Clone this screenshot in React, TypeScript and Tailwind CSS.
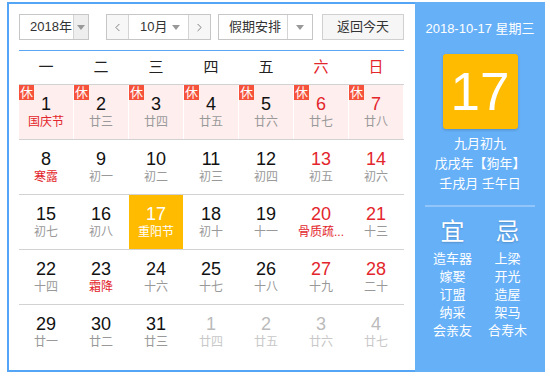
import { ChevronLeft, ChevronRight } from 'lucide-react';

type Day = {
  n: number;
  lunar: string;
  rest?: boolean;
  fest?: boolean;
  weekend?: boolean;
  other?: boolean;
  today?: boolean;
};

const weekdays = ['一', '二', '三', '四', '五', '六', '日'];

const rows: Day[][] = [
  [
    { n: 1, lunar: '国庆节', rest: true, fest: true },
    { n: 2, lunar: '廿三', rest: true },
    { n: 3, lunar: '廿四', rest: true },
    { n: 4, lunar: '廿五', rest: true },
    { n: 5, lunar: '廿六', rest: true },
    { n: 6, lunar: '廿七', rest: true, weekend: true },
    { n: 7, lunar: '廿八', rest: true, weekend: true },
  ],
  [
    { n: 8, lunar: '寒露', fest: true },
    { n: 9, lunar: '初一' },
    { n: 10, lunar: '初二' },
    { n: 11, lunar: '初三' },
    { n: 12, lunar: '初四' },
    { n: 13, lunar: '初五', weekend: true },
    { n: 14, lunar: '初六', weekend: true },
  ],
  [
    { n: 15, lunar: '初七' },
    { n: 16, lunar: '初八' },
    { n: 17, lunar: '重阳节', today: true },
    { n: 18, lunar: '初十' },
    { n: 19, lunar: '十一' },
    { n: 20, lunar: '骨质疏...', weekend: true, fest: true },
    { n: 21, lunar: '十三', weekend: true },
  ],
  [
    { n: 22, lunar: '十四' },
    { n: 23, lunar: '霜降', fest: true },
    { n: 24, lunar: '十六' },
    { n: 25, lunar: '十七' },
    { n: 26, lunar: '十八' },
    { n: 27, lunar: '十九', weekend: true },
    { n: 28, lunar: '二十', weekend: true },
  ],
  [
    { n: 29, lunar: '廿一' },
    { n: 30, lunar: '廿二' },
    { n: 31, lunar: '廿三' },
    { n: 1, lunar: '廿四', other: true },
    { n: 2, lunar: '廿五', other: true },
    { n: 3, lunar: '廿六', other: true },
    { n: 4, lunar: '廿七', other: true },
  ],
];

const good = ['造车器', '嫁娶', '订盟', '纳采', '会亲友'];
const bad = ['上梁', '开光', '造屋', '架马', '合寿木'];

const font = "font-['Liberation_Sans','Noto_Sans_CJK_SC',sans-serif]";

function Arrow() {
  return <span className="block w-0 h-0 border-x-[4px] border-x-transparent border-t-[5px] border-t-[#999]" />;
}

function DayCell({ d }: { d: Day }) {
  let bg = '';
  if (d.today) bg = 'bg-[#ffbb00]';
  else if (d.rest) bg = 'bg-[#feeeee]';

  let numColor = 'text-[#111]';
  if (d.today) numColor = 'text-white';
  else if (d.other) numColor = 'text-[#bbb]';
  else if (d.weekend) numColor = 'text-[#e3262c]';

  let lunarColor = 'text-[#999]';
  if (d.today) lunarColor = 'text-white';
  else if (d.other) lunarColor = 'text-[#c8c8c8]';
  else if (d.fest) lunarColor = 'text-[#e3262c]';

  return (
    <div className={`relative w-[54px] h-[54px] mr-px flex flex-col items-center justify-center ${bg}`}>
      {d.rest && (
        <span className="absolute left-0 top-0 w-[15px] h-[15px] bg-[#f5513b] text-white text-[13px] leading-[15px] text-center">
          休
        </span>
      )}
      <span className={`text-[18px] leading-[20px] ${numColor}`}>{d.n}</span>
      <span className={`text-[12px] leading-[16px] whitespace-nowrap ${lunarColor}`}>{d.lunar}</span>
    </div>
  );
}

export default function App() {
  return (
    <div className={`ml-[7px] mt-[2px] w-[538px] h-[370px] flex ${font}`}>
      <div className="w-[408px] h-full border-l-2 border-y-2 border-[#55a5f6] bg-white pl-[10px] pr-[11px] pt-[10px]">
        {/* toolbar */}
        <div className="flex items-center h-[26px] text-[13px] text-[#333] whitespace-nowrap">
          <div className="flex w-[70px] h-[26px] border border-[#c6c6c6]">
            <div className="flex-1 flex items-center pl-[10px]">2018年</div>
            <div className="w-[15px] flex items-center justify-center bg-[#eee] border-l border-[#d4d4d4]">
              <Arrow />
            </div>
          </div>
          <div className="flex ml-[17px] w-[105px] h-[26px] border border-[#c6c6c6]">
            <div className="w-[22px] flex items-center justify-center bg-[#f7f7f7] border-r border-[#d4d4d4] text-[#666]">
              <ChevronLeft size={13} strokeWidth={1.5} />
            </div>
            <div className="flex-1 flex items-center justify-between pl-[11px] pr-[8px]">
              <span>10月</span>
              <Arrow />
            </div>
            <div className="w-[22px] flex items-center justify-center bg-[#f7f7f7] border-l border-[#d4d4d4] text-[#666]">
              <ChevronRight size={13} strokeWidth={1.5} />
            </div>
          </div>
          <div className="flex ml-[7px] w-[95px] h-[26px] border border-[#c6c6c6]">
            <div className="flex-1 flex items-center pl-[10px]">假期安排</div>
            <div className="w-[25px] flex items-center justify-center border-l border-[#d4d4d4]">
              <Arrow />
            </div>
          </div>
          <div className="ml-[9px] w-[82px] h-[26px] flex items-center justify-center border border-[#d0d0d0] bg-[#f6f6f6]">
            返回今天
          </div>
        </div>

        <div className="mt-[10px] h-px bg-[#5aa6f5]" />

        {/* weekdays */}
        <div className="grid grid-cols-[repeat(7,55px)] h-[33px] items-center text-[15px]">
          {weekdays.map((w, i) => (
            <div key={w} className={`w-[54px] text-center ${i >= 5 ? 'text-[#e3262c]' : 'text-[#222]'}`}>
              {w}
            </div>
          ))}
        </div>

        {/* days */}
        {rows.map((row, ri) => (
          <div key={ri} className="border-t border-[#d2d2d2] grid grid-cols-[repeat(7,55px)]">
            {row.map((d, di) => (
              <DayCell key={di} d={d} />
            ))}
          </div>
        ))}
      </div>

      {/* side panel */}
      <div className="w-[130px] h-full bg-[#66b0f8] text-white flex flex-col items-center pt-[18px]">
        <div className="text-[13px] leading-[18px]">2018-10-17 星期三</div>
        <div className="mt-[16px] w-[75px] h-[75px] rounded-[3px] bg-[#ffbb00] shadow-[0_1px_3px_rgba(0,0,0,0.2)] flex items-center justify-center text-[53px] leading-none">
          17
        </div>
        <div className="mt-[5px] text-[13px] leading-[20px] text-center">
          <div>九月初九</div>
          <div>戊戌年【狗年】</div>
          <div>壬戌月 壬午日</div>
        </div>
        <div className="mt-[11px] w-[110px] h-[2px] bg-[#92c6fa]" />
        <div className="mt-[10px] w-[110px] flex">
          <div className="flex-1 flex flex-col items-center">
            <div className="text-[24px] leading-[30px] [text-shadow:0_1px_2px_rgba(0,0,0,0.2)]">宜</div>
            <div className="mt-[3px] text-[13px] leading-[18px] text-center">
              {good.map((g) => (
                <div key={g}>{g}</div>
              ))}
            </div>
          </div>
          <div className="flex-1 flex flex-col items-center">
            <div className="text-[24px] leading-[30px] [text-shadow:0_1px_2px_rgba(0,0,0,0.2)]">忌</div>
            <div className="mt-[3px] text-[13px] leading-[18px] text-center">
              {bad.map((g) => (
                <div key={g}>{g}</div>
              ))}
            </div>
          </div>
        </div>
      </div>
    </div>
  );
}
